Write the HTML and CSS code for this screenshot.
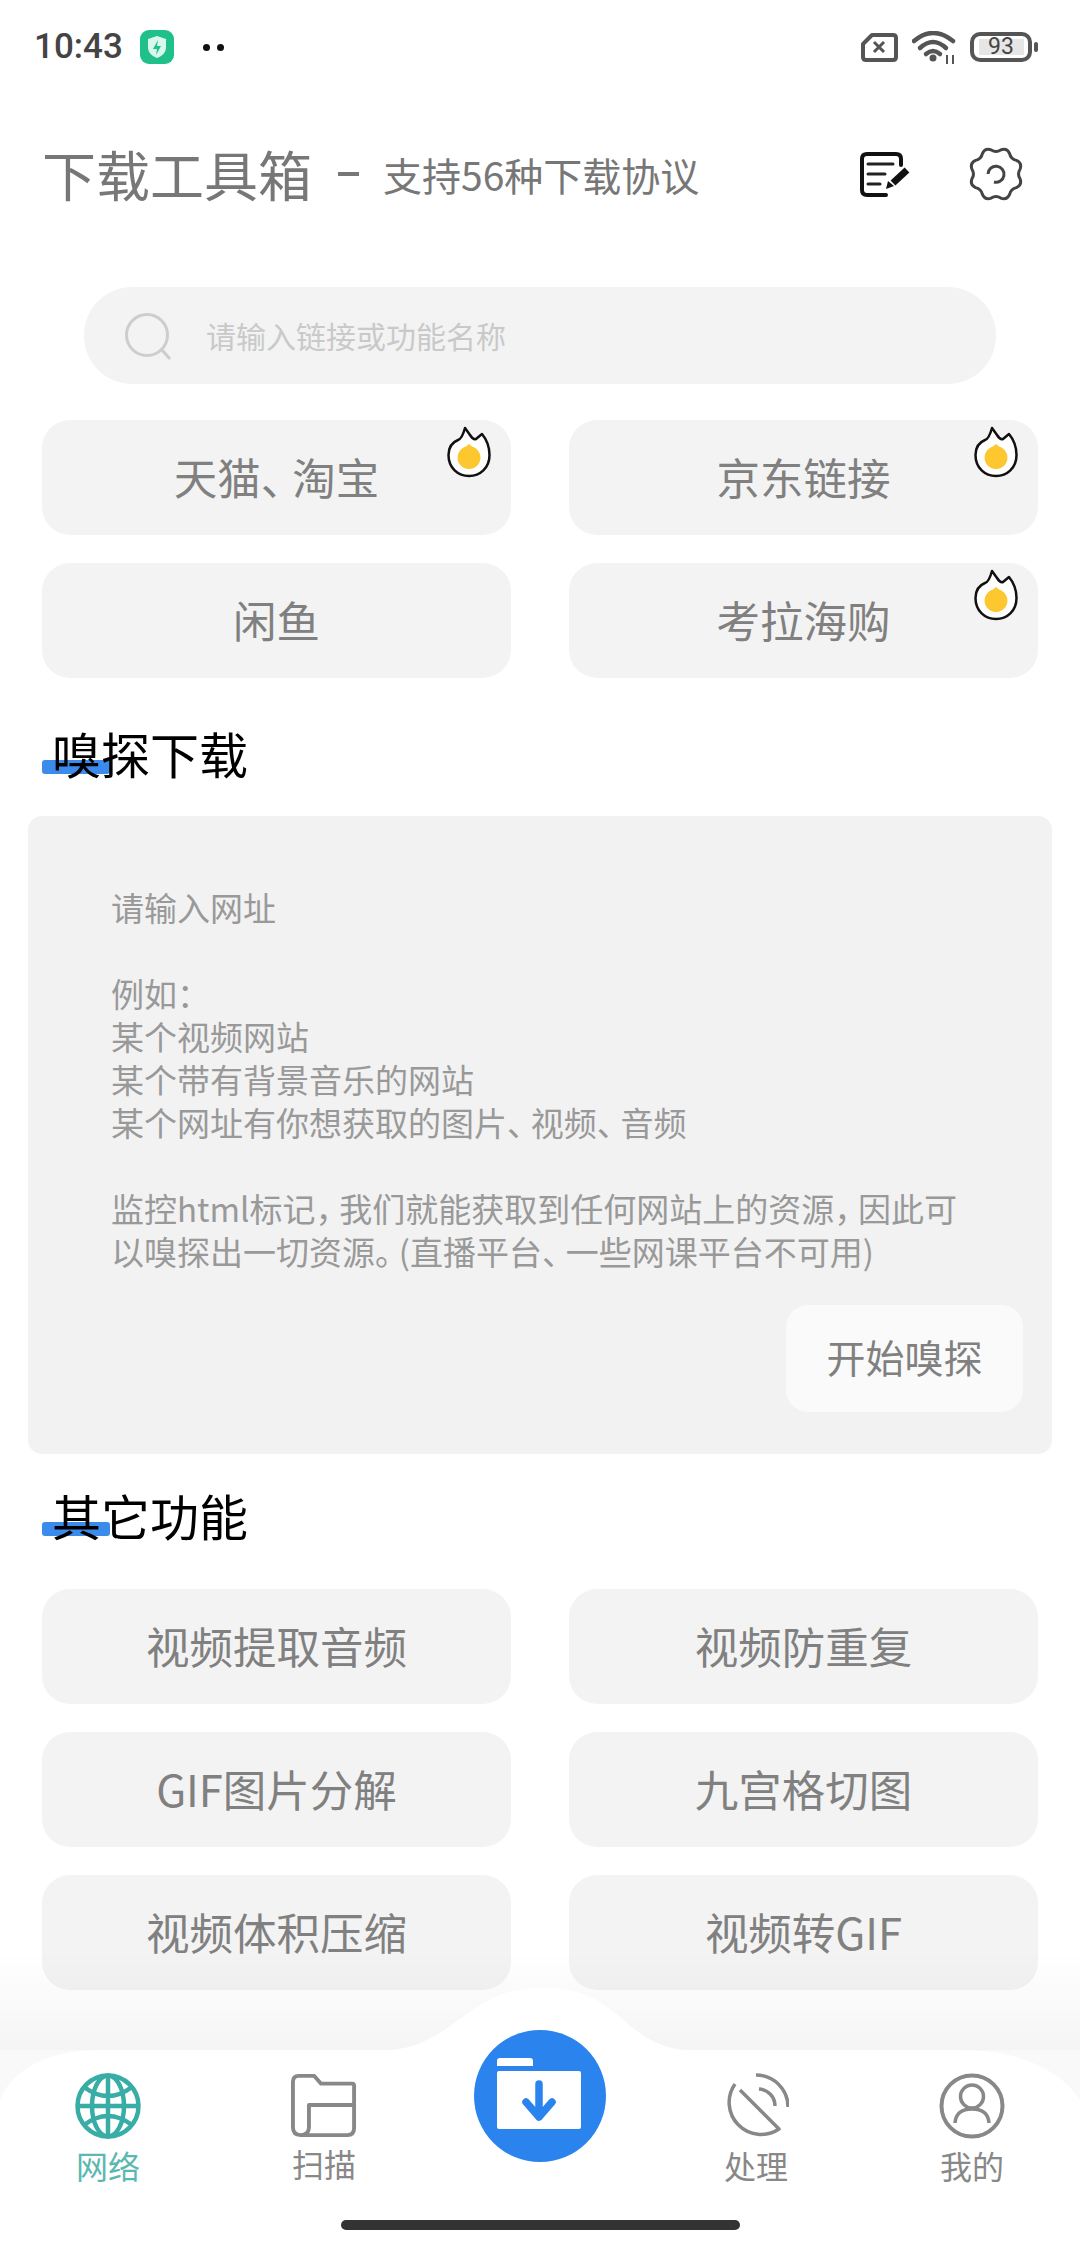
FILE: index.html
```html
<!DOCTYPE html>
<html lang="zh">
<head>
<meta charset="utf-8">
<title>下载工具箱</title>
<link rel="stylesheet" href="styles.css">
</head>
<body>
<div class="page">
  <div class="status">
    <span class="time">10:43</span>
    <svg class="app-badge" viewBox="0 0 34 34"><rect width="34" height="34" rx="9" fill="#1fc08a"/><path d="M17 6l9 3v8c0 6-4 9-9 11-5-2-9-5-9-11V9z" fill="#d9f7ee"/><path d="M18 10l-5 9h4l-1 6 5-9h-4z" fill="#1fc08a"/></svg>
    <span class="dots"><i></i><i></i></span>
    <div class="status-right">
      <svg class="sim" viewBox="0 0 37 29"><path d="M11 2H32Q35 2 35 5V24Q35 27 32 27H5Q2 27 2 24V11Z" fill="none" stroke="#555" stroke-width="4" stroke-linejoin="round"/><path d="M13 9l10 10M23 9L13 19" stroke="#555" stroke-width="3"/></svg>
      <svg class="wifi" viewBox="0 0 44 33"><g fill="none" stroke="#555" stroke-width="4.5" stroke-linecap="round"><path d="M2 10Q21-6 41 10"/><path d="M8 17Q21 5 34 17"/><path d="M14 23Q21 17 28 23"/></g><circle cx="21" cy="27" r="3.5" fill="#555"/><path d="M35 33V24M41 33V24" stroke="#555" stroke-width="2"/></svg>
      <div class="battery"><span class="battery-level">93</span></div>
    </div>
  </div>

  <div class="header">
    <span class="app-title">下载工具箱</span>
    <span class="app-dash"></span>
    <span class="app-sub">支持56种下载协议</span>
    <svg class="note-icon" viewBox="0 0 52 50"><path d="M28 45H9Q4 45 4 40V9Q4 4 9 4H38Q43 4 43 9V15" fill="none" stroke="#111" stroke-width="4" stroke-linecap="round"/><path d="M10 14H35M10 24H27M10 34H22" stroke="#222" stroke-width="3" stroke-linecap="round"/><path d="M35 33L49 20" stroke="#111" stroke-width="7"/><path d="M28 39L30 31L36 36Z" fill="#111"/></svg>
    <svg class="gear-icon" viewBox="-28 -28 56 56"><path d="M24.03 4.78Q26.33 10.91 20.37 13.61Q14.85 14.85 13.61 20.37Q10.91 26.33 4.78 24.03Q0 21-4.78 24.03Q-10.91 26.33-13.61 20.37Q-14.85 14.85-20.37 13.61Q-26.33 10.91-24.03 4.78Q-21 0-24.03-4.78Q-26.33-10.91-20.37-13.61Q-14.85-14.85-13.61-20.37Q-10.91-26.33-4.78-24.03Q0-21 4.78-24.03Q10.91-26.33 13.61-20.37Q14.85-14.85 20.37-13.61Q26.33-10.91 24.03-4.78Q21 0 24.03 4.78Z" fill="none" stroke="#444" stroke-width="3"/><path d="M-8 0A8 8 0 1 1-2 8" fill="none" stroke="#444" stroke-width="3"/></svg>
  </div>

  <div class="search">
    <svg class="search-icon" viewBox="0 0 48 48"><circle cx="23" cy="23" r="20.5" fill="none" stroke="#cdcdcd" stroke-width="3"/><path d="M38 38L46 47" stroke="#cdcdcd" stroke-width="3"/></svg>
    <span class="search-text">请输入链接或功能名称</span>
  </div>

  <div class="grid grid-top">
    <div class="tile"><span>天猫<span class="punct">、</span>淘宝</span><svg class="flame" viewBox="15 10 48 56"><path d="M18.5 40C18.5 32 23 27 28 25Q32 24 35 13L40 20Q43 25 46 24L52 19C57 25 59.500 33 59.500 40C59.500 53 50 61 39 61C28 61 18.500 53 18.500 40Z" fill="#fff" stroke="#111" stroke-width="2.500" stroke-linejoin="round"/><path d="M39 29L42 31.500A11.500 11.500 0 1 1 36 31.500Z" fill="#fcc72f"/></svg></div>
    <div class="tile"><span>京东链接</span><svg class="flame" viewBox="15 10 48 56"><path d="M18.5 40C18.5 32 23 27 28 25Q32 24 35 13L40 20Q43 25 46 24L52 19C57 25 59.500 33 59.500 40C59.500 53 50 61 39 61C28 61 18.500 53 18.500 40Z" fill="#fff" stroke="#111" stroke-width="2.500" stroke-linejoin="round"/><path d="M39 29L42 31.500A11.500 11.500 0 1 1 36 31.500Z" fill="#fcc72f"/></svg></div>
    <div class="tile"><span>闲鱼</span></div>
    <div class="tile"><span>考拉海购</span><svg class="flame" viewBox="15 10 48 56"><path d="M18.5 40C18.5 32 23 27 28 25Q32 24 35 13L40 20Q43 25 46 24L52 19C57 25 59.500 33 59.500 40C59.500 53 50 61 39 61C28 61 18.500 53 18.500 40Z" fill="#fff" stroke="#111" stroke-width="2.500" stroke-linejoin="round"/><path d="M39 29L42 31.500A11.500 11.500 0 1 1 36 31.500Z" fill="#fcc72f"/></svg></div>
  </div>

  <div class="section-title title-sniff"><span class="title-bar"></span><span class="title-text">嗅探下载</span></div>

  <div class="panel">
    <p class="panel-text">请输入网址<br><br>例如：<br>某个视频网站<br>某个带有背景音乐的网站<br>某个网址有你想获取的图片<span class="punct">、</span>视频<span class="punct">、</span>音频<br><br>监控html标记<span class="punct">，</span>我们就能获取到任何网站上的资源<span class="punct">，</span>因此可<br>以嗅探出一切资源<span class="punct">。</span>(直播平台<span class="punct">、</span>一些网课平台不可用)</p>
    <div class="panel-action"><span class="start-btn">开始嗅探</span></div>
  </div>

  <div class="section-title title-other"><span class="title-bar"></span><span class="title-text">其它功能</span></div>

  <div class="grid">
    <div class="tile"><span>视频提取音频</span></div>
    <div class="tile"><span>视频防重复</span></div>
    <div class="tile"><span>GIF图片分解</span></div>
    <div class="tile"><span>九宫格切图</span></div>
    <div class="tile"><span>视频体积压缩</span></div>
    <div class="tile"><span>视频转GIF</span></div>
  </div>

  <div class="nav">
    <svg class="nav-bg" viewBox="0 0 1080 298">
      <defs><linearGradient id="fade" x1="0" y1="0" x2="0" y2="1"><stop offset="0" stop-color="#000" stop-opacity="0"/><stop offset="1" stop-color="#000" stop-opacity=".042"/></linearGradient></defs>
      <rect width="1080" height="100" fill="url(#fade)"/>
      <rect y="100" width="1080" height="60" fill="#000" fill-opacity=".022"/>
      <path d="M0 150C10 125 40 100 100 100H386C420 100 445 80 468 63C490 47 510 38 542 38C575 38 595 45 620 67C640 85 660 100 690 100H960C1020 100 1060 120 1080 150V298H0Z" fill="#fff"/>
    </svg>
    <div class="tabs">
      <div class="tab tab-active">
        <svg class="tab-icon" viewBox="0 0 66 66"><g fill="none" stroke="#37ada5" stroke-width="4.5"><circle cx="33" cy="33" r="30.5"/><ellipse cx="33" cy="33" rx="16" ry="30.5"/><path d="M33 2V64M2 33H64M9 14Q33 32 57 14M9 52Q33 34 57 52"/></g></svg>
        <span class="tab-label">网络</span>
      </div>
      <div class="tab tab-scan">
        <svg class="tab-icon" viewBox="0 0 68 66"><path d="M2 8Q2 2 8 2H24L31 10H63Q65 10 65 12V56Q65 63 58 63H10Q2 63 2 55ZM18.500 55Q18.500 63 10 63M18.500 55V32H65" fill="none" stroke="#888" stroke-width="4" stroke-linejoin="round"/></svg>
        <span class="tab-label">扫描</span>
      </div>
      <div class="tab tab-center">
        <svg class="fab" viewBox="0 0 132 132"><circle cx="66" cy="66" r="66" fill="#2b84ee"/><path d="M23 36V31Q23 28 26 28H56Q59 28 59 31V36Z" fill="#fff"/><rect x="23" y="41" width="84" height="58" rx="2" fill="#fff"/><path d="M65 54V87M52 72L65 87L78 72" fill="none" stroke="#2b84ee" stroke-width="7.500" stroke-linecap="round" stroke-linejoin="round"/></svg>
      </div>
      <div class="tab">
        <svg class="tab-icon" viewBox="0 0 66 66"><path d="M12 11A32 32 0 0 0 56 56L17 17M33 2A32 32 0 0 1 65 34M36 16A17 17 0 0 1 52 33" fill="none" stroke="#888" stroke-width="3.500" stroke-linejoin="round"/></svg>
        <span class="tab-label">处理</span>
      </div>
      <div class="tab">
        <svg class="tab-icon" viewBox="0 0 66 66"><circle cx="33" cy="33" r="30.500" fill="none" stroke="#888" stroke-width="4"/><circle cx="33" cy="23.500" r="11.500" fill="none" stroke="#888" stroke-width="3.500"/><path d="M16 50Q17 36 33 36Q49 36 50 50" fill="none" stroke="#888" stroke-width="3.500"/></svg>
        <span class="tab-label">我的</span>
      </div>
    </div>
    <div class="home-bar"></div>
  </div>
</div>
</body>
</html>
```
FILE: styles.css
```css
* { box-sizing: border-box; }
html, body { margin: 0; padding: 0; background: #fff; }
body { font-family: "Noto Sans CJK SC", "Noto Sans", sans-serif; }
.page { width: 1080px; height: 2248px; overflow: hidden; }

.status { height: 94px; display: flex; align-items: center; padding: 0 42px 0 34px; }
.time { font-family: Roboto, sans-serif; font-weight: 500; font-size: 35px; color: #444; width: 88px; line-height: 40px; }
.app-badge { width: 34px; height: 34px; margin-left: 18px; }
.dots { display: flex; gap: 7px; margin-left: 29px; }
.dots i { width: 7px; height: 7px; border-radius: 50%; background: #111; }
.status-right { margin-left: auto; display: flex; align-items: center; }
.sim { width: 37px; height: 29px; }
.wifi { width: 44px; height: 33px; margin-left: 14px; }
.battery { position: relative; width: 62px; height: 30px; margin-left: 14px; margin-right: 6px; border: 4px solid #555; border-radius: 10px; display: flex; align-items: center; justify-content: center; }
.battery::after { content: ""; position: absolute; left: 60px; top: 6px; width: 4px; height: 10px; border-radius: 2px; background: #555; }
.battery-level { display: block; width: 45px; height: 16px; background: #e6e6e6; text-align: center; font-family: Roboto, sans-serif; font-size: 23px; line-height: 16px; color: #444; }

.header { height: 80px; margin-top: 40px; padding-left: 42px; display: flex; align-items: center; color: #777; }
.app-title { font-size: 54px; line-height: 80px; }
.app-dash { width: 21px; height: 4px; background: #777; margin-left: 26px; }
.app-sub { font-size: 39px; line-height: 80px; margin-left: 24px; }
.note-icon { width: 52px; height: 50px; margin-left: auto; margin-top: 2px; position: relative; left: -1px; }
.gear-icon { width: 56px; height: 56px; margin-left: 57px; margin-right: 56px; }

.search { height: 97px; width: 912px; margin: 73px 0 0 84px; border-radius: 48px; background: #f3f3f3; display: flex; align-items: center; padding-left: 40px; }
.search-icon { width: 48px; height: 48px; }
.search-text { font-size: 30px; line-height: 40px; color: #c9c9c9; margin-left: 34px; position: relative; top: -1px; }

.grid { display: grid; grid-template-columns: 469px 469px; grid-auto-rows: 115px; column-gap: 58px; row-gap: 28px; margin: 39px 0 0 42px; }
.grid-top { margin-top: 36px; }
.tile { position: relative; border-radius: 28px; background: #f3f3f3; display: flex; align-items: center; justify-content: center; padding-bottom: 2px; font-size: 43.5px; line-height: 60px; color: #808080; }
.flame { position: absolute; top: 5px; right: 18px; width: 48px; height: 56px; }
.punct { letter-spacing: -0.28em; }

.section-title { position: relative; height: 66px; padding-left: 52px; margin-top: 30px; }
.title-sniff { margin-top: 44px; }
.title-bar { position: absolute; left: 42px; top: 38px; width: 68px; height: 14px; border-radius: 3px; background: #3b8bec; }
.title-text { position: relative; top: -2px; font-size: 49px; line-height: 66px; color: #000; }

.panel { width: 1024px; height: 638px; margin: 28px 0 0 28px; padding: 70px 29px 0 83px; border-radius: 14px; background: #f2f2f2; }
.panel-text { margin: 0; font-size: 33px; line-height: 43px; color: #999; white-space: nowrap; }
.panel-action { display: flex; justify-content: flex-end; margin-top: 32px; }
.start-btn { width: 237px; height: 107px; border-radius: 22px; background: #fafafa; color: #808080; font-size: 39px; line-height: 103px; text-align: center; }

.nav { position: relative; height: 298px; margin-top: -40px; padding-top: 123px; }
.nav-bg { position: absolute; left: 0; top: 0; width: 1080px; height: 298px; }
.tabs { position: relative; display: grid; grid-template-columns: repeat(5, 216px); height: 114px; }
.tab { display: flex; flex-direction: column; align-items: center; }
.tab-icon { width: 66px; height: 66px; }
.tab-label { font-size: 32px; line-height: 44px; margin-top: 4px; color: #888; }
.tab-scan .tab-label { margin-top: 2px; }
.tab-active .tab-label { color: #5bb8b0; }
.fab { width: 132px; height: 132px; margin-top: -43px; }
.home-bar { position: relative; width: 399px; height: 10px; margin: 33px auto 0; border-radius: 5px; background: #333; }
```
